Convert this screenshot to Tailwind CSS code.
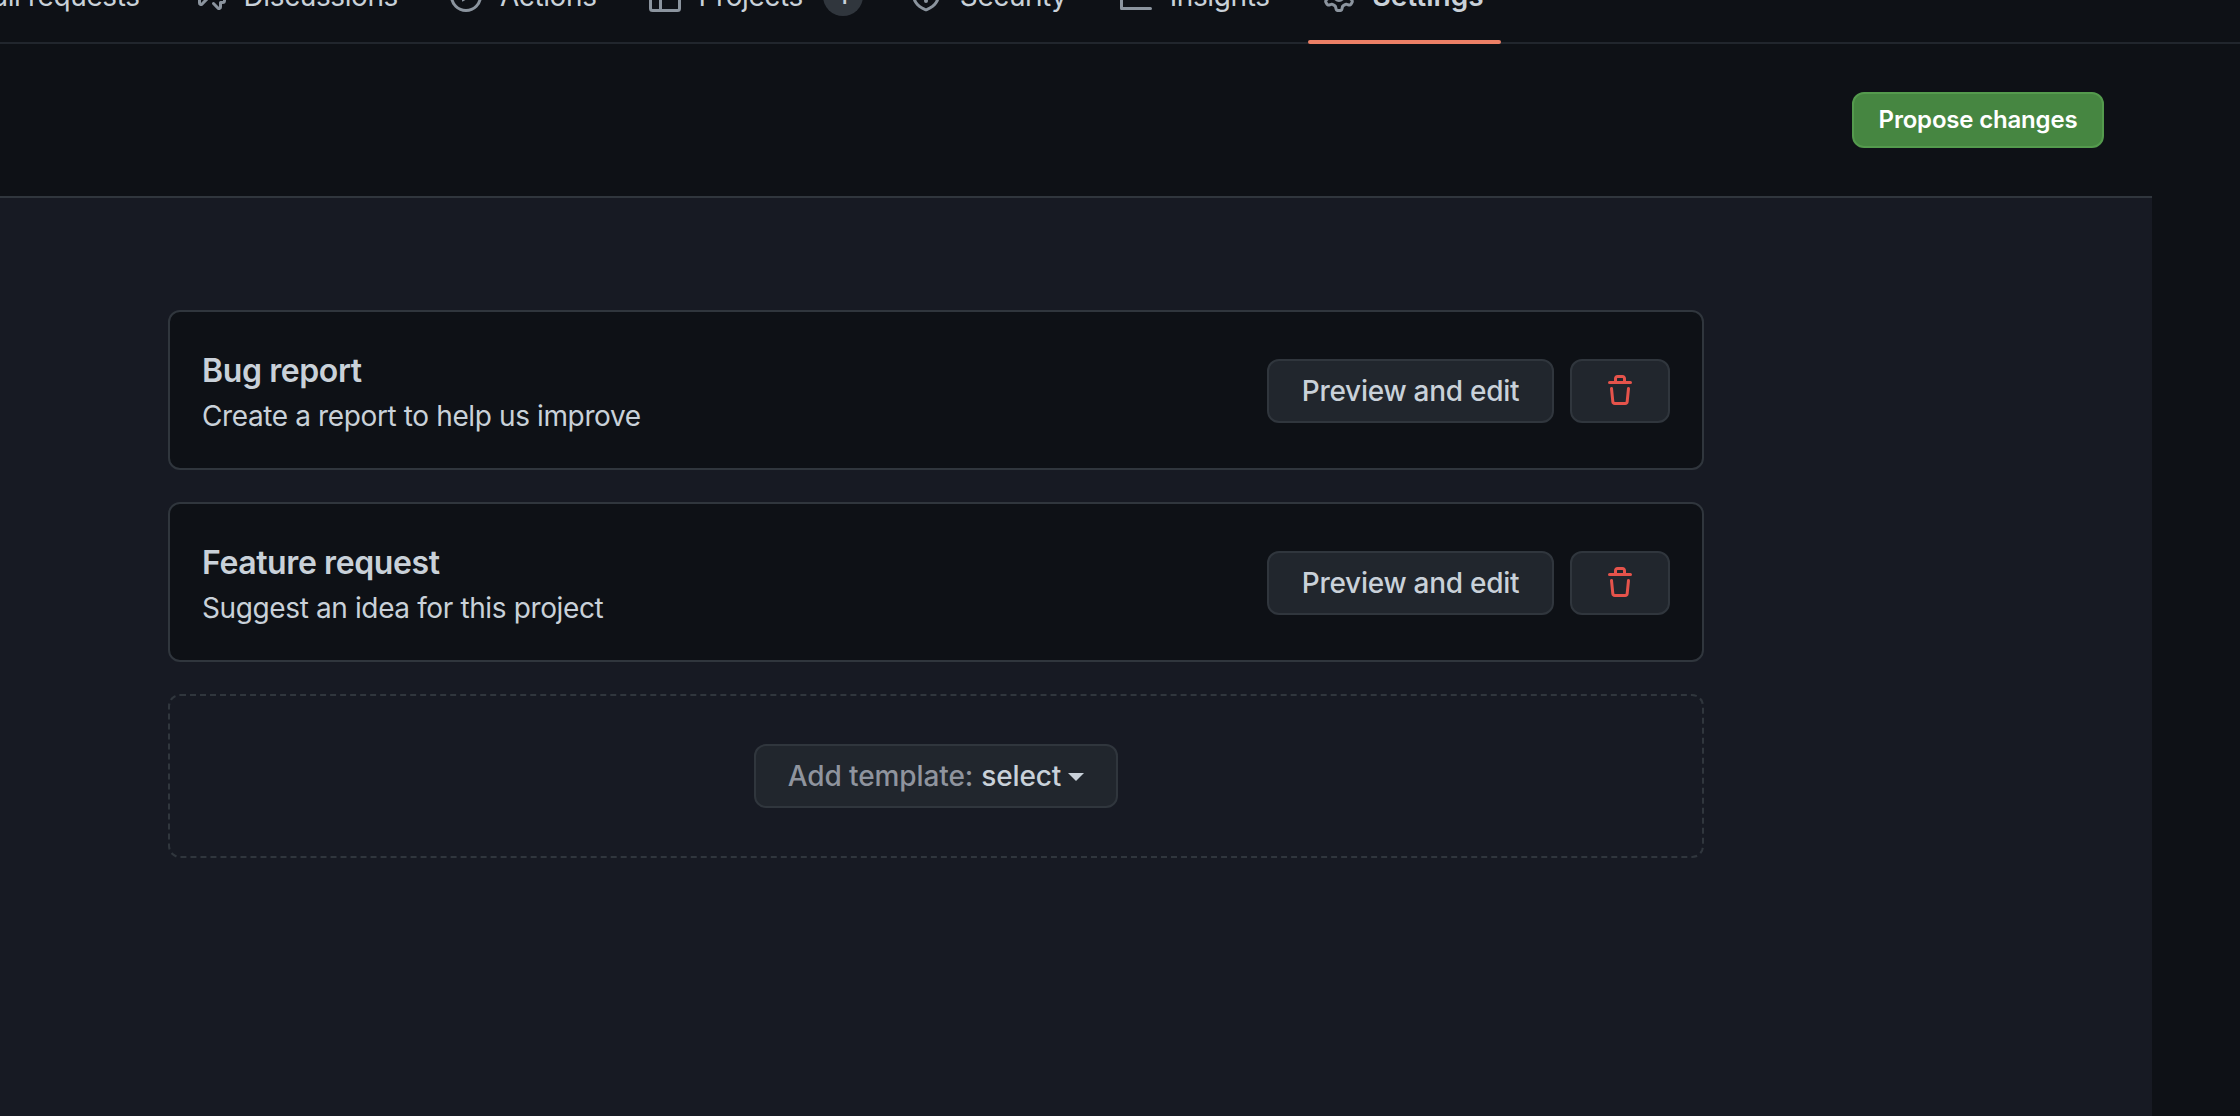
<!DOCTYPE html>
<html lang="en">
<head>
    <meta charset="UTF-8">
    <title>Issue templates</title>
    <script src="https://cdn.jsdelivr.net/npm/@tailwindcss/browser@4"></script>
</head>
<body class="bg-[#0e1116] text-[#c9d1d9] font-['Inter',sans-serif] text-[28px] h-screen overflow-hidden">

    <!-- Repo tabs, scrolled so only their bottom shows -->
    <nav class="h-[44px] border-b-2 border-[#21262d] overflow-hidden">
        <ul class="flex items-center h-[40px] -mt-[24px] -ml-[26px] whitespace-nowrap leading-[40px] tracking-[-0.4px]">
            <li>Pull requests</li>
            <li class="ml-[54px] flex items-center gap-[18px] relative">
                <svg class="w-[32px] h-[32px] fill-[#8b949e]" viewBox="0 0 16 16"><path d="M1.75 1h8.5c.966 0 1.75.784 1.75 1.75v5.5A1.75 1.75 0 0 1 10.25 10H7.061l-2.574 2.573A1.458 1.458 0 0 1 2 11.543V10h-.25A1.75 1.75 0 0 1 0 8.25v-5.5C0 1.784.784 1 1.75 1ZM1.5 2.75v5.5c0 .138.112.25.25.25h1a.75.75 0 0 1 .75.75v2.19l2.72-2.72a.749.749 0 0 1 .53-.22h3.5a.25.25 0 0 0 .25-.25v-5.5a.25.25 0 0 0-.25-.25h-8.5a.25.25 0 0 0-.25.25Zm13 2a.25.25 0 0 0-.25-.25h-.5a.75.75 0 0 1 0-1.5h.5c.966 0 1.75.784 1.75 1.75v5.5A1.75 1.75 0 0 1 14.25 12H14v1.543a1.458 1.458 0 0 1-2.487 1.03L9.22 12.28a.749.749 0 0 1 .53-1.28.749.749 0 0 1 .53.22l2.22 2.22v-2.19a.75.75 0 0 1 .75-.75h1a.25.25 0 0 0 .25-.25Z"/></svg>
                <span>Discussions</span>
            </li>
            <li class="ml-[52px] flex items-center gap-[18px]">
                <svg class="w-[32px] h-[32px] fill-[#8b949e]" viewBox="0 0 16 16"><path d="M8 0a8 8 0 1 1 0 16A8 8 0 0 1 8 0ZM1.5 8a6.5 6.5 0 1 0 13 0 6.5 6.5 0 0 0-13 0Zm4.879-2.773 4.264 2.559a.25.25 0 0 1 0 .428l-4.264 2.559A.25.25 0 0 1 6 10.559V5.442a.25.25 0 0 1 .379-.215Z"/></svg>
                <span>Actions</span>
            </li>
            <li class="ml-[52px] flex items-center gap-[18px]">
                <svg class="w-[32px] h-[32px] fill-[#8b949e]" viewBox="0 0 16 16"><path d="M0 1.75C0 .784.784 0 1.75 0h12.5C15.216 0 16 .784 16 1.75v12.5A1.75 1.75 0 0 1 14.25 16H1.75A1.75 1.75 0 0 1 0 14.25ZM6.5 6.5v8h7.75a.25.25 0 0 0 .25-.25V6.5Zm8-1.5V1.75a.25.25 0 0 0-.25-.25H6.5V5Zm-13 1.5v7.75c0 .138.112.25.25.25H5v-8ZM5 5V1.5H1.75a.25.25 0 0 0-.25.25V5Z"/></svg>
                <span>Projects</span>
                <span class="w-[40px] h-[40px] ml-[2px] rounded-full bg-[#30363d] text-center text-[24px] font-medium">1</span>
            </li>
            <li class="ml-[47px] flex items-center gap-[18px]">
                <svg class="w-[32px] h-[32px] fill-[#8b949e]" viewBox="0 0 16 16"><path d="M7.467.133a1.748 1.748 0 0 1 1.066 0l5.25 1.68A1.75 1.75 0 0 1 15 3.48V7c0 1.566-.32 3.182-1.303 4.682-.983 1.498-2.585 2.813-5.032 3.855a1.697 1.697 0 0 1-1.33 0c-2.447-1.042-4.049-2.357-5.032-3.855C1.32 10.182 1 8.566 1 7V3.48a1.75 1.75 0 0 1 1.217-1.667Zm.61 1.429a.25.25 0 0 0-.153 0l-5.25 1.68a.25.25 0 0 0-.174.238V7c0 1.358.275 2.666 1.057 3.86.784 1.194 2.121 2.34 4.366 3.297a.196.196 0 0 0 .154 0c2.245-.956 3.582-2.104 4.366-3.298C13.225 9.666 13.5 8.36 13.5 7V3.48a.251.251 0 0 0-.174-.237l-5.25-1.68ZM8.75 4.75v3a.75.75 0 0 1-1.5 0v-3a.75.75 0 0 1 1.5 0ZM9 10.5a1 1 0 1 1-2 0 1 1 0 0 1 2 0Z"/></svg>
                <span>Security</span>
            </li>
            <li class="ml-[53px] flex items-center gap-[18px]">
                <svg class="w-[32px] h-[32px] fill-[#8b949e]" viewBox="0 0 16 16"><path d="M1.5 1.75V13.5h13.75a.75.75 0 0 1 0 1.5H.75a.75.75 0 0 1-.75-.75V1.75a.75.75 0 0 1 1.5 0Zm14.28 2.53-5.25 5.25a.75.75 0 0 1-1.06 0L7 7.06 4.28 9.78a.751.751 0 0 1-1.042-.018.751.751 0 0 1-.018-1.042l3.25-3.25a.75.75 0 0 1 1.06 0L10 7.94l4.72-4.72a.751.751 0 0 1 1.042.018.751.751 0 0 1 .018 1.042Z"/></svg>
                <span>Insights</span>
            </li>
            <li class="ml-[53px] flex items-center gap-[18px] font-semibold tracking-normal">
                <svg class="w-[32px] h-[32px] fill-[#8b949e]" viewBox="0 0 16 16"><path d="M8 0a8.2 8.2 0 0 1 .701.031C9.444.095 9.99.645 10.16 1.29l.288 1.107c.018.066.079.158.212.224.231.114.454.243.668.386.123.082.233.09.299.071l1.103-.303c.644-.176 1.392.021 1.82.63.27.385.506.792.704 1.218.315.675.111 1.422-.364 1.891l-.814.806c-.049.048-.098.147-.088.294.016.257.016.515 0 .772-.01.147.038.246.088.294l.814.806c.475.469.679 1.216.364 1.891a7.977 7.977 0 0 1-.704 1.217c-.428.61-1.176.807-1.82.63l-1.102-.302c-.067-.019-.177-.011-.3.071a5.909 5.909 0 0 1-.668.386c-.133.066-.194.158-.211.224l-.29 1.106c-.168.646-.715 1.196-1.458 1.26a8.006 8.006 0 0 1-1.402 0c-.743-.064-1.289-.614-1.458-1.26l-.289-1.106c-.018-.066-.079-.158-.212-.224a5.738 5.738 0 0 1-.668-.386c-.123-.082-.233-.09-.299-.071l-1.103.303c-.644.176-1.392-.021-1.82-.63a8.12 8.12 0 0 1-.704-1.218c-.315-.675-.111-1.422.363-1.891l.815-.806c.05-.048.098-.147.088-.294a6.214 6.214 0 0 1 0-.772c.01-.147-.038-.246-.088-.294l-.815-.806C.635 6.045.431 5.298.746 4.623a7.92 7.92 0 0 1 .704-1.217c.428-.61 1.176-.807 1.82-.63l1.102.302c.067.019.177.011.3-.071.214-.143.437-.272.668-.386.133-.066.194-.158.211-.224l.29-1.106C6.009.645 6.556.095 7.299.03 7.53.01 7.764 0 8 0Zm-.571 1.525c-.036.003-.108.036-.137.146l-.289 1.105c-.147.561-.549.967-.998 1.189-.173.086-.34.183-.5.29-.417.278-.97.423-1.529.27l-1.103-.303c-.109-.03-.175.016-.195.045-.22.312-.412.644-.573.99-.014.031-.021.11.059.19l.815.806c.411.406.562.957.53 1.456a4.709 4.709 0 0 0 0 .582c.032.499-.119 1.05-.53 1.456l-.815.806c-.081.08-.073.159-.059.19.162.346.353.677.573.989.02.03.085.076.195.046l1.102-.303c.56-.153 1.113-.008 1.53.27.161.107.328.204.501.29.447.222.85.629.997 1.189l.289 1.105c.029.109.101.143.137.146a6.6 6.6 0 0 0 1.142 0c.036-.003.108-.036.137-.146l.289-1.105c.147-.561.549-.967.998-1.189.173-.086.34-.183.5-.29.417-.278.97-.423 1.529-.27l1.103.303c.109.029.175-.016.195-.045.22-.313.411-.644.573-.99.014-.031.021-.11-.059-.19l-.815-.806c-.411-.406-.562-.957-.53-1.456a4.709 4.709 0 0 0 0-.582c-.032-.499.119-1.05.53-1.456l.815-.806c.081-.08.073-.159.059-.19a6.464 6.464 0 0 0-.573-.989c-.02-.03-.085-.076-.195-.046l-1.102.303c-.56.153-1.113.008-1.53-.27a4.44 4.44 0 0 0-.501-.29c-.447-.222-.85-.629-.997-1.189l-.289-1.105c-.029-.11-.101-.143-.137-.146a6.6 6.6 0 0 0-1.142 0ZM11 8a3 3 0 1 1-6 0 3 3 0 0 1 6 0ZM9.5 8a1.5 1.5 0 1 0-3.001.001A1.5 1.5 0 0 0 9.5 8Z"/></svg>
                <span>Settings</span>
            </li>
        </ul>
    </nav>
    <!-- Active tab underline -->
    <div class="absolute left-[1308px] top-[40px] w-[193px] h-[4px] rounded-[2px] bg-[#ec8066]"></div>

    <div class="w-[2152px]">
        <!-- Editor toolbar -->
        <div class="h-[154px] flex items-center justify-end pr-[48px] border-b-2 border-[#30363d]">
            <button class="w-[252px] h-[56px] rounded-[12px] bg-[#468641] border-2 border-[#549a4d] text-white text-[24px] font-semibold tracking-[-0.19px]">Propose changes</button>
        </div>

        <!-- Template list -->
        <main class="bg-[#171a23] h-[918px] pl-[168px] pt-[112px]">
            <div class="w-[1536px] flex flex-col gap-[32px]">
                <div class="h-[160px] flex items-center justify-between bg-[#0e1116] border-2 border-[#30363d] rounded-[12px] pl-[32px] pr-[32px]">
                    <div class="mt-[6px]">
                        <h3 class="text-[32px] font-semibold tracking-[-0.4px] leading-[46px]">Bug report</h3>
                        <p class="leading-[46px] -mt-[1px] tracking-[-0.38px]">Create a report to help us improve</p>
                    </div>
                    <div class="flex gap-[16px] mt-[1px]">
                        <button class="w-[287px] h-[64px] rounded-[12px] bg-[#21262d] border-2 border-[#30363d] font-medium tracking-[-0.27px]">Preview and edit</button>
                        <button class="w-[100px] h-[64px] rounded-[12px] bg-[#21262d] border-2 border-[#30363d] flex items-center justify-center">
                            <svg class="w-[32px] h-[32px] fill-[#e5534b]" viewBox="0 0 16 16"><path d="M11 1.75V3h2.25a.75.75 0 0 1 0 1.5H2.75a.75.75 0 0 1 0-1.5H5V1.75C5 .784 5.784 0 6.75 0h2.5C10.216 0 11 .784 11 1.75ZM4.496 6.675l.66 6.6a.25.25 0 0 0 .249.225h5.19a.25.25 0 0 0 .249-.225l.66-6.6a.75.75 0 0 1 1.492.149l-.66 6.6A1.748 1.748 0 0 1 10.595 15h-5.19a1.75 1.75 0 0 1-1.741-1.575l-.66-6.6a.75.75 0 1 1 1.492-.15ZM6.5 1.75V3h3V1.75a.25.25 0 0 0-.25-.25h-2.5a.25.25 0 0 0-.25.25Z"/></svg>
                        </button>
                    </div>
                </div>

                <div class="h-[160px] flex items-center justify-between bg-[#0e1116] border-2 border-[#30363d] rounded-[12px] pl-[32px] pr-[32px]">
                    <div class="mt-[6px]">
                        <h3 class="text-[32px] font-semibold tracking-[-0.4px] leading-[46px]">Feature request</h3>
                        <p class="leading-[46px] -mt-[1px] tracking-[-0.38px]">Suggest an idea for this project</p>
                    </div>
                    <div class="flex gap-[16px] mt-[1px]">
                        <button class="w-[287px] h-[64px] rounded-[12px] bg-[#21262d] border-2 border-[#30363d] font-medium tracking-[-0.27px]">Preview and edit</button>
                        <button class="w-[100px] h-[64px] rounded-[12px] bg-[#21262d] border-2 border-[#30363d] flex items-center justify-center">
                            <svg class="w-[32px] h-[32px] fill-[#e5534b]" viewBox="0 0 16 16"><path d="M11 1.75V3h2.25a.75.75 0 0 1 0 1.5H2.75a.75.75 0 0 1 0-1.5H5V1.75C5 .784 5.784 0 6.75 0h2.5C10.216 0 11 .784 11 1.75ZM4.496 6.675l.66 6.6a.25.25 0 0 0 .249.225h5.19a.25.25 0 0 0 .249-.225l.66-6.6a.75.75 0 0 1 1.492.149l-.66 6.6A1.748 1.748 0 0 1 10.595 15h-5.19a1.75 1.75 0 0 1-1.741-1.575l-.66-6.6a.75.75 0 1 1 1.492-.15ZM6.5 1.75V3h3V1.75a.25.25 0 0 0-.25-.25h-2.5a.25.25 0 0 0-.25.25Z"/></svg>
                        </button>
                    </div>
                </div>

                <div class="h-[164px] flex items-center justify-center border-2 border-dashed border-[#30363d] rounded-[12px]">
                    <button class="w-[364px] h-[64px] rounded-[12px] bg-[#21262d] border-2 border-[#30363d] font-medium flex items-center justify-center tracking-[-0.1px]">
                        <span class="text-[#8f949e]">Add template:</span>
                        <span class="ml-[8px]">select</span>
                        <span class="ml-[7px] mt-[2px] border-x-[8px] border-x-transparent border-t-[8px] border-t-[#c9d1d9]"></span>
                    </button>
                </div>
            </div>
        </main>
    </div>
</body>
</html>
